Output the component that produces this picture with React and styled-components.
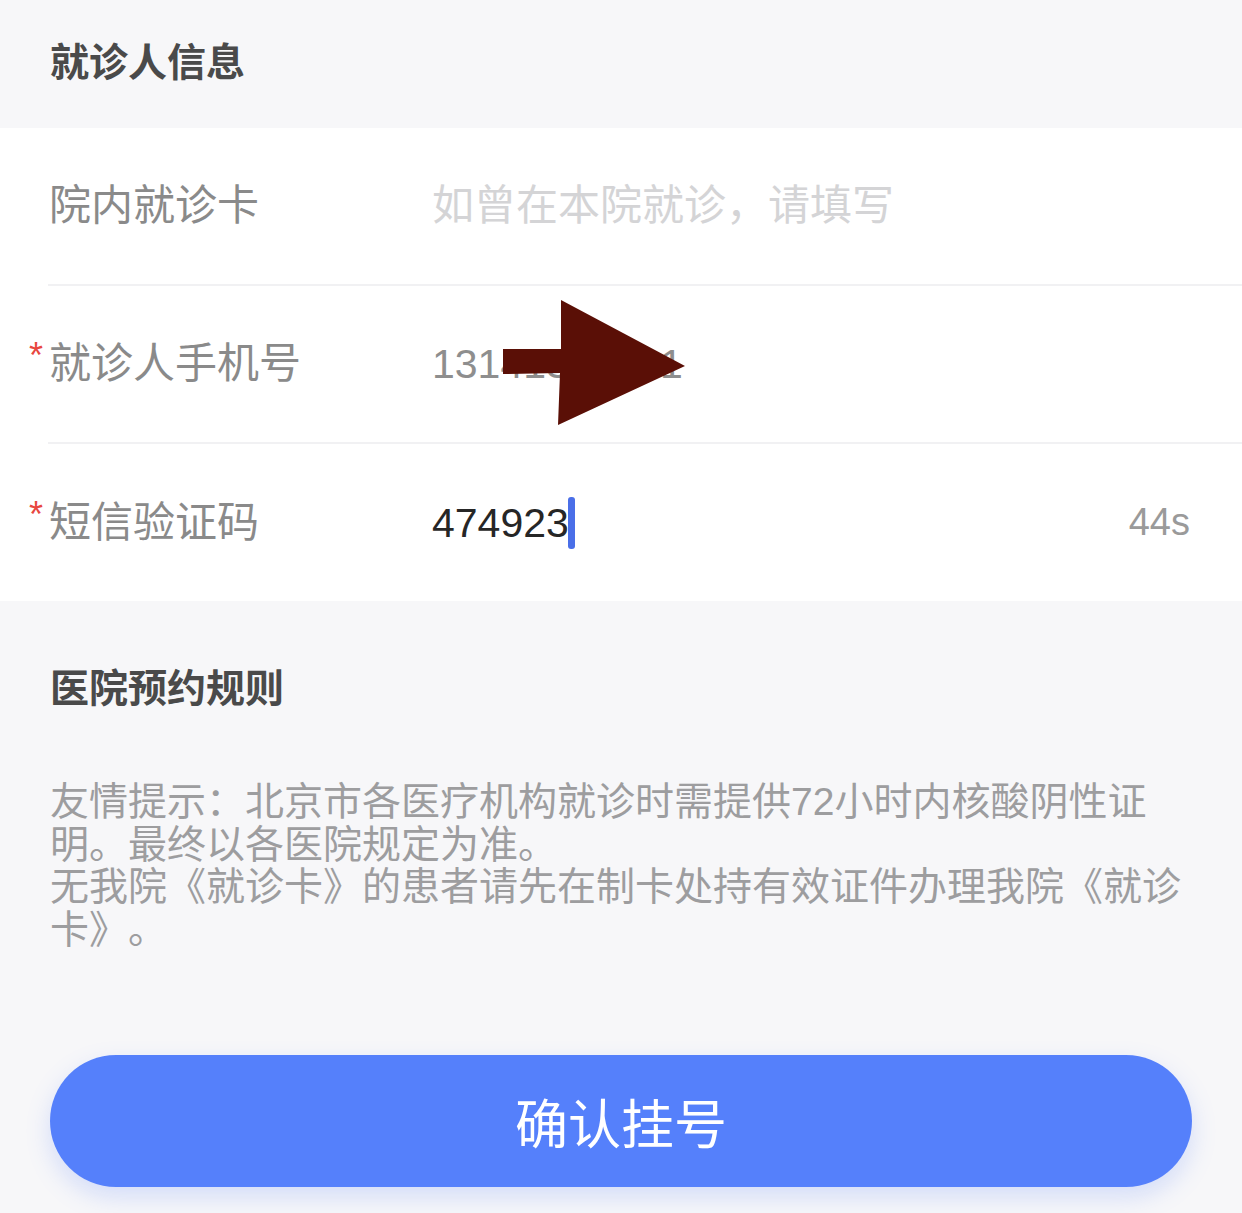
import React from "react";
import styled, { createGlobalStyle } from "styled-components";

const GlobalStyle = createGlobalStyle`
  body {
    margin: 0;
    background: #f7f7f9;
    font-family: "Liberation Sans", "Noto Sans CJK SC", sans-serif;
  }
`;

const fields = [
  { label: "院内就诊卡", placeholder: "如曾在本院就诊，请填写" },
  { label: "就诊人手机号", value: "13141360521", required: true, muted: true },
  { label: "短信验证码", value: "474923", required: true, cursor: true, extra: "44s" },
];

const App = () => {
  return (
    <Page>
      <GlobalStyle />
      <SectionTitle>就诊人信息</SectionTitle>

      <Card>
        {fields.map((f) => (
          <Row key={f.label}>
            <Label>
              {f.required && <Star>*</Star>}
              {f.label}
            </Label>
            <Value $muted={f.muted} $placeholder={!f.value}>
              {f.value || f.placeholder}
              {f.cursor && <Cursor />}
            </Value>
            {f.extra && <Countdown>{f.extra}</Countdown>}
          </Row>
        ))}
      </Card>

      <Rules>
        <RulesTitle>医院预约规则</RulesTitle>
        <RulesText>
          友情提示：北京市各医疗机构就诊时需提供72小时内核酸阴性证明。最终以各医院规定为准。
          <br />
          无我院《就诊卡》的患者请先在制卡处持有效证件办理我院《就诊卡》。
        </RulesText>
      </Rules>

      <SubmitButton>确认挂号</SubmitButton>

      {/* annotation arrow drawn over the phone number */}
      <Arrow width="1242" height="1213" viewBox="0 0 1242 1213">
        <polygon
          points="503,349 561,349 561,300 685,366 558,425 560,373 503,374"
          fill="#5a0f06"
        />
      </Arrow>
    </Page>
  );
};

const Page = styled.div`
  position: relative;
  min-height: 1213px;
  background: #f7f7f9;
  overflow: hidden;
`;

const SectionTitle = styled.div`
  height: 128px;
  display: flex;
  align-items: center;
  padding: 0 50px 10px;
  box-sizing: border-box;
  font-size: 39px;
  font-weight: 700;
  color: #4a4a4a;
`;

const Card = styled.div`
  background: #ffffff;
  padding-left: 48px;
`;

const Row = styled.div`
  height: 156px;
  display: flex;
  align-items: center;
  padding: 0 52px 0 1px;
  border-bottom: 2px solid #f1f1f3;
  &:last-child {
    border-bottom: none;
    height: 157px;
  }
`;

const Label = styled.div`
  width: 383px;
  flex-shrink: 0;
  font-size: 42px;
  line-height: 52px;
  color: #8a8a8a;
  white-space: nowrap;
`;

const Star = styled.span`
  display: inline-block;
  width: 20px;
  margin-left: -20px;
  padding-top: 3px;
  font-size: 36px;
  line-height: 30px;
  vertical-align: top;
  color: #e8473f;
`;

const Value = styled.div`
  flex: 1;
  display: flex;
  align-items: center;
  font-size: ${(p) => (p.$placeholder ? "42px" : "41px")};
  line-height: 52px;
  color: ${(p) => (p.$placeholder ? "#d4d4d6" : p.$muted ? "#8e8e8e" : "#262626")};
  white-space: nowrap;
  text-spacing-trim: space-all;
`;

const Cursor = styled.span`
  display: inline-block;
  width: 7px;
  height: 52px;
  margin-left: -1px;
  border-radius: 3px;
  background: #4a6fe8;
`;

const Countdown = styled.div`
  font-size: 38px;
  color: #9a9a9a;
`;

const Rules = styled.div`
  padding: 62px 50px 0;
`;

const RulesTitle = styled.div`
  font-size: 39px;
  line-height: 52px;
  font-weight: 700;
  color: #4a4a4a;
`;

const RulesText = styled.p`
  width: 1133px;
  margin: 66px 0 0;
  font-size: 39px;
  line-height: 42.5px;
  color: #9d9d9f;
  text-spacing-trim: space-all;
`;

const SubmitButton = styled.button`
  display: block;
  width: 1142px;
  height: 132px;
  margin: 104px 50px 0;
  border: none;
  border-radius: 66px;
  background: #5580fb;
  box-shadow: 0 10px 24px rgba(85, 128, 251, 0.22);
  font-family: inherit;
  font-size: 53px;
  color: #ffffff;
`;

const Arrow = styled.svg`
  position: absolute;
  left: 0;
  top: 0;
  pointer-events: none;
`;

export default App;
